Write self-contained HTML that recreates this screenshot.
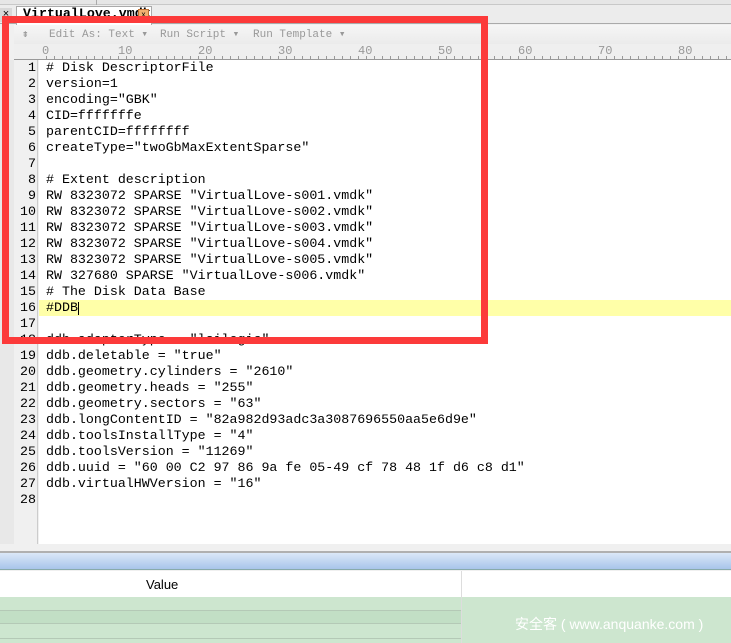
<!DOCTYPE html>
<html><head><meta charset="utf-8"><style>
*{margin:0;padding:0;box-sizing:border-box}
body{width:731px;height:643px;overflow:hidden;background:#f0f0f0;font-family:"Liberation Sans",sans-serif;position:relative}
.abs{position:absolute}
.code{font-family:"Liberation Mono",monospace;font-size:13.3px;line-height:16px;white-space:pre;color:#000}
.tb{position:absolute;top:27px;font-size:11px;color:#999;font-family:'Liberation Mono',monospace;white-space:pre}
</style></head><body>
<div class="abs" style="left:0;top:0;width:731px;height:5px;background:#e6e6e6;border-bottom:1px solid #c8c8c8"></div>
<div class="abs" style="left:96px;top:0;width:1px;height:5px;background:#aaa"></div>
<div class="abs" style="left:0;top:5px;width:731px;height:19px;background:#ececec;border-bottom:1px solid #aaa"></div>
<div class="abs" style="left:0;top:8px;width:12px;height:14px;background:#d8d8d8;font-size:11px;text-align:center">×</div>
<div class="abs" style="left:16px;top:6px;width:136px;height:19px;background:#fff;border:1px solid #aaa;border-bottom:none"></div>
<div class="abs code" style="left:23px;top:6px;font-weight:bold">VirtualLove.vmdk</div>
<div class="abs" style="left:138px;top:9px;width:11px;height:11px;background:#f0b070;border:1px solid #c07030;font-size:8px;line-height:9px;text-align:center">x</div>
<div class="abs" style="left:14px;top:25px;width:717px;height:19px;background:linear-gradient(#f6f6f6,#ebebeb)"></div>
<div class="tb" style="left:22px">⇟</div>
<div class="tb" style="left:49px">Edit As: Text ▾</div>
<div class="tb" style="left:160px">Run Script ▾</div>
<div class="tb" style="left:253px">Run Template ▾</div>
<div class="abs" style="left:14px;top:44px;width:717px;height:16px;background:#efefef;border-bottom:1px solid #999"></div>
<div class="abs" style="left:0;top:44px;width:731px;height:16px;font-family:'Liberation Mono',monospace;font-size:12px;color:#999">
<span class="abs" style="left:42px;top:0">0</span><span class="abs" style="left:118px">10</span><span class="abs" style="left:198px">20</span><span class="abs" style="left:278px">30</span><span class="abs" style="left:358px">40</span><span class="abs" style="left:438px">50</span><span class="abs" style="left:518px">60</span><span class="abs" style="left:598px">70</span><span class="abs" style="left:678px">80</span></div>
<div class="abs" style="left:46px;top:56px;width:685px;height:3px;background:repeating-linear-gradient(90deg,#999 0 1px,transparent 1px 8px)"></div>
<div class="abs" style="left:14px;top:60px;width:24px;height:484px;background:#f0f0f0;border-right:1px solid #ccc"></div>
<div class="abs" style="left:0;top:60px;width:14px;height:484px;background:#e8e8e8"></div>
<div class="abs" style="left:39px;top:60px;width:692px;height:484px;background:#fff"></div>
<div class="abs" style="left:39px;top:300px;width:692px;height:16px;background:#ffffa8"></div>
<div class="abs code" style="left:14px;top:60px;width:22px;text-align:right">1
2
3
4
5
6
7
8
9
10
11
12
13
14
15
16
17
18
19
20
21
22
23
24
25
26
27
28</div>
<div class="abs code" style="left:46px;top:60px"># Disk DescriptorFile
version=1
encoding="GBK"
CID=fffffffe
parentCID=ffffffff
createType="twoGbMaxExtentSparse"

# Extent description
RW 8323072 SPARSE "VirtualLove-s001.vmdk"
RW 8323072 SPARSE "VirtualLove-s002.vmdk"
RW 8323072 SPARSE "VirtualLove-s003.vmdk"
RW 8323072 SPARSE "VirtualLove-s004.vmdk"
RW 8323072 SPARSE "VirtualLove-s005.vmdk"
RW 327680 SPARSE "VirtualLove-s006.vmdk"
# The Disk Data Base
#DDB

ddb.adapterType = "lsilogic"
ddb.deletable = "true"
ddb.geometry.cylinders = "2610"
ddb.geometry.heads = "255"
ddb.geometry.sectors = "63"
ddb.longContentID = "82a982d93adc3a3087696550aa5e6d9e"
ddb.toolsInstallType = "4"
ddb.toolsVersion = "11269"
ddb.uuid = "60 00 C2 97 86 9a fe 05-49 cf 78 48 1f d6 c8 d1"
ddb.virtualHWVersion = "16"
</div>
<div class="abs" style="left:78px;top:302px;width:1px;height:13px;background:#000"></div>
<div class="abs" style="left:2px;top:16px;width:486px;height:328px;border:7px solid #fc3a3a"></div>
<div class="abs" style="left:0;top:551px;width:731px;height:2px;background:#b0b0b0"></div>
<div class="abs" style="left:0;top:553px;width:731px;height:17px;background:linear-gradient(#dbe8f8,#a8c4ea);border-bottom:1px solid #8aa"></div>
<div class="abs" style="left:0;top:571px;width:731px;height:26px;background:#fff"></div>
<div class="abs" style="left:146px;top:577px;font-size:13px">Value</div>
<div class="abs" style="left:0;top:597px;width:731px;height:46px;background:#cde6cf"></div>
<div class="abs" style="left:0;top:610px;width:461px;height:14px;background:#c2dfc5;border-top:1px solid #b4c9b6;border-bottom:1px solid #b4c9b6"></div>
<div class="abs" style="left:0;top:638px;width:461px;height:1px;background:#b4c9b6"></div>
<div class="abs" style="left:461px;top:571px;width:1px;height:72px;background:#ddd"></div>
<div class="abs" style="left:515px;top:614px;font-size:14px;color:#fff;font-family:'Liberation Sans','Noto Sans CJK SC',sans-serif">安全客 ( www.anquanke.com )</div>
</body></html>
